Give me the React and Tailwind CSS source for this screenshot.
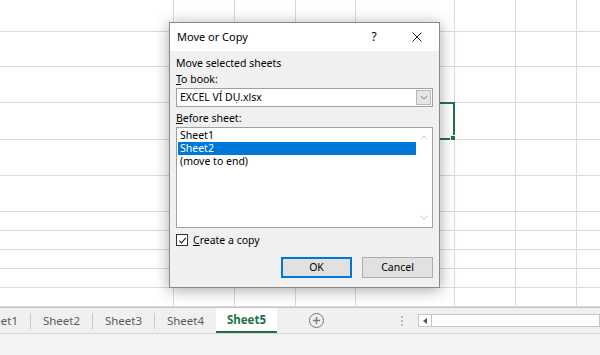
import React from 'react';

const font = { fontFamily: '"Noto Sans", "Segoe UI", sans-serif' };

// grid geometry (px)
const rowHeights = [32, 35, 36, 37, 36, 36, 19, 19, 19, 19, 19];
const colWidths = [174, 61, 61, 60, 99, 61, 61, 60];

const ChevronDown = ({ className }) => (
  <svg viewBox="0 0 10 6" className={className} fill="none" stroke="currentColor" strokeWidth="1">
    <path d="M1 1l4 4 4-4" />
  </svg>
);

const ChevronUp = ({ className }) => (
  <svg viewBox="0 0 10 6" className={className} fill="none" stroke="currentColor" strokeWidth="1">
    <path d="M1 5l4-4 4 4" />
  </svg>
);

const Grid = () => (
  <div className="flex flex-col">
    {rowHeights.map((h, r) => (
      <div key={r} className="flex" style={{ height: h }}>
        {colWidths.map((w, c) => (
          <div
            key={c}
            className="relative shrink-0 border-b border-r border-[#dadada] bg-white"
            style={{ width: w }}
          >
            {r === 3 && c === 4 && (
              // selected cell
              <div className="absolute -left-px -top-px -right-[1px] -bottom-[1px] border-2 border-[#217346]">
                <div className="absolute -right-[4px] -bottom-[4px] h-[6px] w-[6px] bg-[#217346] outline outline-1 outline-white" />
              </div>
            )}
          </div>
        ))}
      </div>
    ))}
  </div>
);

const Tab = ({ label, active, className = '' }) => (
  <div
    className={
      'flex h-full w-[61px] shrink-0 items-center justify-center ' +
      (active
        ? 'border-b-2 border-[#217346] bg-white font-bold text-[#217346]'
        : 'text-[#5a5a5a]') +
      ' ' +
      className
    }
  >
    {label}
  </div>
);

const Sep = () => <div className="h-[16px] w-px shrink-0 bg-[#c8c8c8]" />;

const SheetBar = () => (
  <div className="flex flex-col">
    <div className="flex h-[26px] items-center overflow-hidden border-t border-[#c6c6c6] bg-[#f0f0f0] text-[11.5px]">
      <Tab label="Sheet1" className="-ml-[31px]" />
      <Sep />
      <Tab label="Sheet2" />
      <Sep />
      <Tab label="Sheet3" />
      <Sep />
      <Tab label="Sheet4" />
      <Tab label="Sheet5" active />
      <div className="ml-[32px] flex h-[15px] w-[15px] shrink-0 items-center justify-center rounded-full border-[1.5px] border-[#777] text-[#777]">
        <svg viewBox="0 0 10 10" className="h-[9px] w-[9px]" stroke="currentColor" strokeWidth="1.6">
          <path d="M5 1v8M1 5h8" />
        </svg>
      </div>
      <div className="ml-[77px] flex shrink-0 flex-col gap-[2px]">
        <div className="h-[2px] w-[2px] rounded-full bg-[#aaa]" />
        <div className="h-[2px] w-[2px] rounded-full bg-[#aaa]" />
        <div className="h-[2px] w-[2px] rounded-full bg-[#aaa]" />
      </div>
      <div className="ml-[15px] flex h-[13px] flex-1 border border-[#c6c6c6] bg-white">
        <div className="flex w-[13px] items-center justify-center border-r border-[#c6c6c6]">
          <svg viewBox="0 0 4 6" className="h-[6px] w-[4px]" fill="#555">
            <path d="M4 0v6L0 3z" />
          </svg>
        </div>
      </div>
    </div>
    <div className="h-[22px] border-t border-[#d6d6d6] bg-[#f3f3f3]" />
  </div>
);

const Dialog = () => (
  <div
    className="absolute left-[169px] top-[22px] flex h-[266px] w-[271px] flex-col border border-[#8a8a8a] bg-[#f0f0f0] text-[10.5px] text-black shadow-[0_2px_14px_rgba(0,0,0,0.35)]"
    style={font}
  >
    {/* title bar */}
    <div className="flex h-[28px] items-center bg-white pl-[7px]">
      <span className="text-[11px]">Move or Copy</span>
      <span className="ml-auto w-[14px] text-center text-[12px]">?</span>
      <svg viewBox="0 0 10 10" className="ml-[31px] mr-[17px] h-[10px] w-[10px]" stroke="#222" strokeWidth="1">
        <path d="M0.5 0.5l9 9M9.5 0.5l-9 9" />
      </svg>
    </div>

    <div className="flex flex-1 flex-col px-[6px] pt-[4px]">
      <div className="leading-[16px]">Move selected sheets</div>
      <div className="leading-[16px]">
        <span className="underline">T</span>o book:
      </div>
      <div className="mt-px flex h-[19px] border border-[#a0a0a0] bg-white">
        <span className="flex-1 pl-[3px] leading-[17px]">EXCEL VÍ DỤ.xlsx</span>
        <div className="m-px flex w-[15px] items-center justify-center border border-[#b8b8b8] bg-[#e5e5e5] text-[#666]">
          <ChevronDown className="h-[5px] w-[8px]" />
        </div>
      </div>

      <div className="mt-[3px] leading-[16px]">
        <span className="underline">B</span>efore sheet:
      </div>
      <div className="mt-px flex h-[101px] border border-[#a0a0a0] bg-white">
        <div className="flex-1 pl-px pt-px">
          <div className="h-[13px] pl-[2px] leading-[13px]">Sheet1</div>
          <div className="h-[13px] bg-[#0078d7] pl-[2px] leading-[13px] text-white">Sheet2</div>
          <div className="h-[13px] pl-[2px] leading-[13px]">(move to end)</div>
        </div>
        <div className="flex w-[16px] flex-col items-center justify-between py-[7px] text-[#bdbdbd]">
          <ChevronUp className="h-[5px] w-[8px]" />
          <ChevronDown className="h-[5px] w-[8px]" />
        </div>
      </div>

      <div className="mt-[6px] flex h-[12px] items-center">
        <div className="flex h-[12px] w-[12px] items-center justify-center border border-[#333] bg-white">
          <svg viewBox="0 0 10 10" className="h-[9px] w-[9px]" fill="none" stroke="#222" strokeWidth="1.2">
            <path d="M1.5 5.2l2.4 2.4 4.8-5.6" />
          </svg>
        </div>
        <span className="ml-[5px] leading-[12px]">
          <span className="underline">C</span>reate a copy
        </span>
      </div>

      <div className="mt-[11px] flex justify-end gap-[10px]">
        <button className="h-[21px] w-[71px] border-2 border-[#0078d7] bg-[#e1e1e1] leading-[17px]">OK</button>
        <button className="h-[21px] w-[71px] border border-[#adadad] bg-[#e1e1e1] leading-[19px]">Cancel</button>
      </div>
    </div>
  </div>
);

export default function App() {
  return (
    <div className="relative h-[355px] w-[600px] overflow-hidden bg-white" style={font}>
      <Grid />
      <SheetBar />
      <Dialog />
    </div>
  );
}
